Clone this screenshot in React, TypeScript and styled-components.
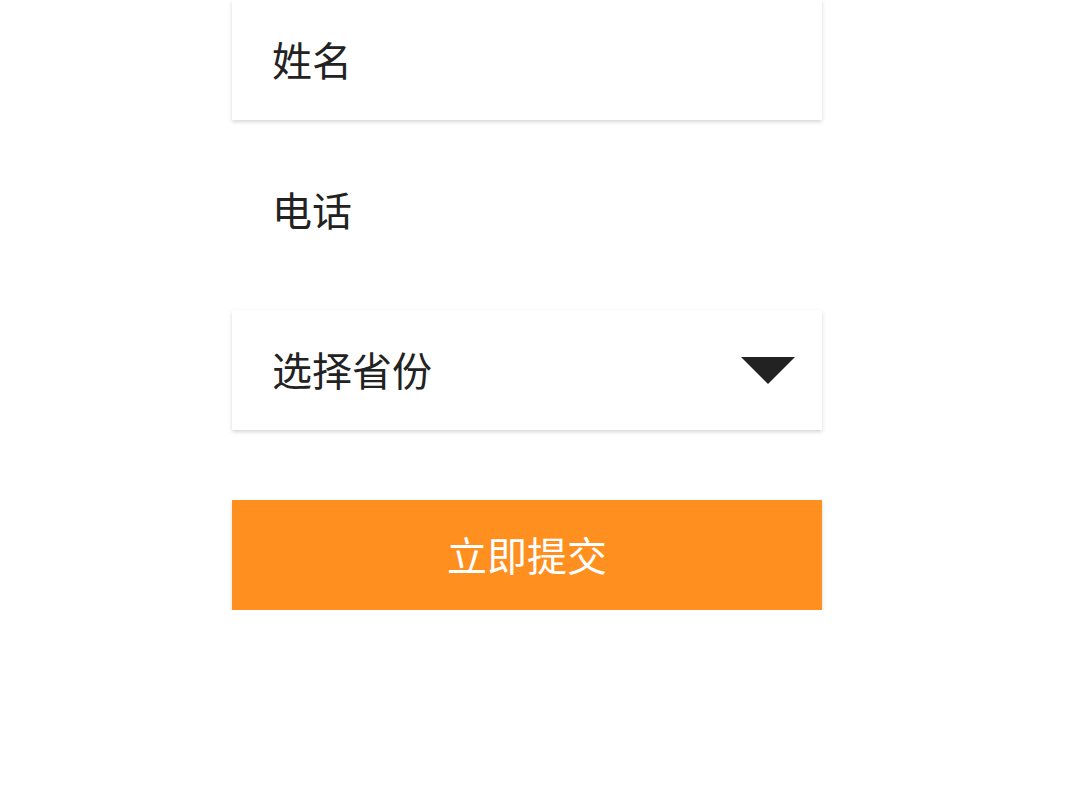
import React from "react";
import styled, { createGlobalStyle } from "styled-components";

const Global = createGlobalStyle`
  html, body { margin: 0; padding: 0; background: #ffffff; }
  body { font-family: "Noto Sans CJK SC", "Noto Sans", sans-serif; }
`;

const Form = styled.form`
  width: 590px;
  margin-left: 232px;
  display: flex;
  flex-direction: column;
`;

const Field = styled.div<{ $shadow?: boolean; $gap: number }>`
  height: 120px;
  margin-top: ${(p) => p.$gap}px;
  padding: 0 27px 0 40px;
  display: flex;
  align-items: center;
  justify-content: space-between;
  background: #ffffff;
  box-shadow: ${(p) => (p.$shadow ? "0 2px 4px rgba(0,0,0,0.16)" : "none")};
`;

const Label = styled.span`
  font-size: 40px;
  line-height: 1;
  color: #222222;
  margin-top: -2px;
`;

const Caret = styled.svg`
  width: 54px;
  height: 27px;
  display: block;
`;

const Submit = styled.button`
  margin-top: 70px;
  height: 110px;
  border: none;
  background: #ff8f1f;
  color: #ffffff;
  font-family: inherit;
  font-size: 40px;
  line-height: 1;
  box-shadow: 0 2px 4px rgba(0,0,0,0.16);
  display: flex;
  align-items: center;
  justify-content: center;
  padding: 0 0 2px 0;
`;

export default function App() {
  return (
    <>
      <Global />
      <Form onSubmit={(e) => e.preventDefault()}>
        <Field $shadow $gap={0}>
          <Label>姓名</Label>
        </Field>
        <Field $gap={30}>
          <Label>电话</Label>
        </Field>
        <Field $shadow $gap={40}>
          <Label>选择省份</Label>
          <Caret viewBox="0 0 54 27">
            <polygon points="0,0 54,0 27,27" fill="#222222" />
          </Caret>
        </Field>
        <Submit type="submit">立即提交</Submit>
      </Form>
    </>
  );
}
